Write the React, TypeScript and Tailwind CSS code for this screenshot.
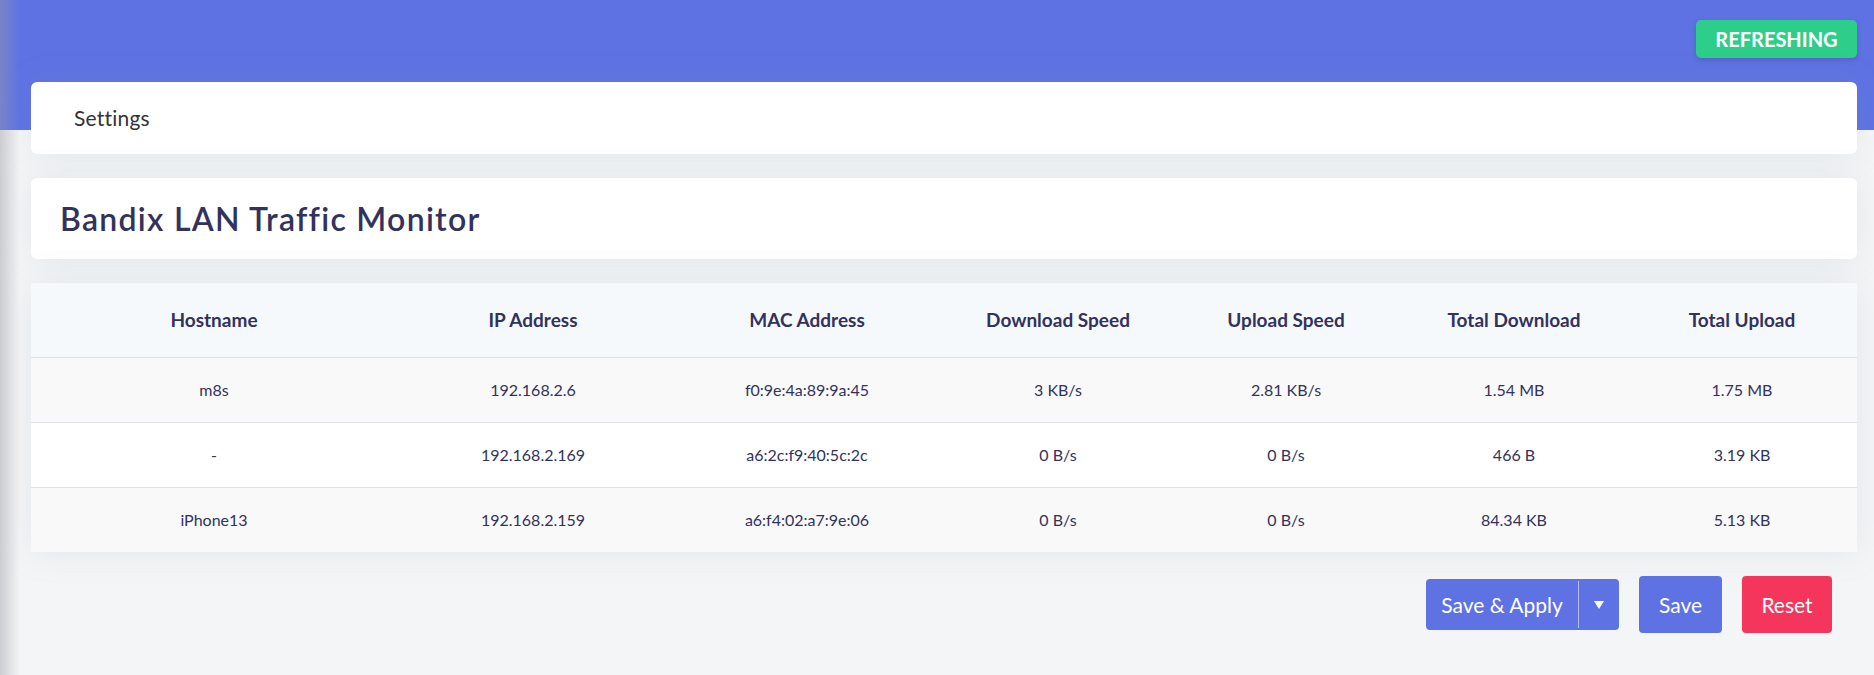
import React from 'react';

type Host = {
  hostname: string;
  ip: string;
  mac: string;
  down: string;
  up: string;
  totalDown: string;
  totalUp: string;
};

const HOSTS: Host[] = [
  { hostname: 'm8s',      ip: '192.168.2.6',   mac: 'f0:9e:4a:89:9a:45', down: '3 KB/s', up: '2.81 KB/s', totalDown: '1.54 MB',  totalUp: '1.75 MB' },
  { hostname: '-',        ip: '192.168.2.169', mac: 'a6:2c:f9:40:5c:2c', down: '0 B/s',  up: '0 B/s',     totalDown: '466 B',    totalUp: '3.19 KB' },
  { hostname: 'iPhone13', ip: '192.168.2.159', mac: 'a6:f4:02:a7:9e:06', down: '0 B/s',  up: '0 B/s',     totalDown: '84.34 KB', totalUp: '5.13 KB' },
];

const COLUMNS = [
  { label: 'Hostname',       width: 366 },
  { label: 'IP Address',     width: 272 },
  { label: 'MAC Address',    width: 276 },
  { label: 'Download Speed', width: 226 },
  { label: 'Upload Speed',   width: 230 },
  { label: 'Total Download', width: 226 },
  { label: 'Total Upload',   width: 230 },
];

export default function App() {
  return (
    <div className="relative min-h-screen bg-[#f4f5f7] font-['Lato',sans-serif] text-[#32325d]">
      {/* sidebar edge shadow */}
      <div className="pointer-events-none absolute inset-y-0 left-0 z-20 w-[20px] bg-gradient-to-r from-[#9a9ca3]/45 to-transparent" />

      {/* Header band */}
      <div className="flex h-[130px] items-start justify-end bg-[#5e72e4] pl-[31px] pr-[17px] pt-[20px]">
        <span className="flex h-[38px] w-[161px] items-center justify-center rounded-[5px] bg-[#2dce89] text-[20px] font-bold text-white shadow-[0_2px_5px_rgba(50,50,93,0.25)]">
          REFRESHING
        </span>
      </div>

      <main className="relative z-10 -mt-[48px] flex flex-col gap-6 pl-[31px] pr-[17px]">
        {/* Tabs */}
        <div className="flex h-[72px] items-center rounded-[6px] bg-white px-[43px] shadow-[0_0_2rem_0_rgba(136,152,170,0.15)]">
          <span className="text-[21px] tracking-[0.01em] text-[#333]">Settings</span>
        </div>

        {/* Title */}
        <div className="flex h-[81px] items-center rounded-[6px] bg-white px-[29px] shadow-[0_0_2rem_0_rgba(136,152,170,0.15)]">
          <h2 className="text-[32px] font-semibold tracking-[0.04em] text-[#32325d]">Bandix LAN Traffic Monitor</h2>
        </div>

        {/* Table */}
        <div className="bg-white shadow-[0_0_2rem_0_rgba(136,152,170,0.15)]">
          <table className="w-full table-fixed border-collapse text-center">
            <colgroup>
              {COLUMNS.map((c) => (
                <col key={c.label} style={{ width: c.width }} />
              ))}
            </colgroup>
            <thead>
              <tr className="h-[74px] bg-[#f6f9fc]">
                {COLUMNS.map((c) => (
                  <th key={c.label} className="text-[19px] font-bold text-[#32325d]">{c.label}</th>
                ))}
              </tr>
            </thead>
            <tbody>
              {HOSTS.map((h, i) => (
                <tr
                  key={h.ip}
                  className={[
                    'h-[65px] border-t border-[#dee2e6] text-[16px] text-[#32325d]',
                    i % 2 === 0 ? 'bg-[#f9f9f9]' : 'bg-white',
                  ].join(' ')}
                >
                  <td>{h.hostname}</td>
                  <td>{h.ip}</td>
                  <td>{h.mac}</td>
                  <td>{h.down}</td>
                  <td>{h.up}</td>
                  <td>{h.totalDown}</td>
                  <td>{h.totalUp}</td>
                </tr>
              ))}
            </tbody>
          </table>
        </div>

        {/* Actions */}
        <div className="flex items-center justify-end gap-[20px] pr-[25px]">
          <div className="flex h-[51px] overflow-hidden rounded-[4px] bg-[#5e72e4] text-[21px] text-white">
            <button type="button" className="w-[152px]">Save &amp; Apply</button>
            <span className="my-[2px] w-px bg-[#b4bdf3]" />
            <button type="button" className="flex w-[40px] items-center justify-center">
              <svg width="10" height="8" viewBox="0 0 10 8" fill="white">
                <path d="M0 0h10L5 8z" />
              </svg>
            </button>
          </div>
          <button type="button" className="h-[57px] w-[83px] rounded-[4px] bg-[#5e72e4] text-[21px] text-white">
            Save
          </button>
          <button type="button" className="h-[57px] w-[90px] rounded-[4px] bg-[#f5365c] text-[21px] text-white">
            Reset
          </button>
        </div>
      </main>
    </div>
  );
}
